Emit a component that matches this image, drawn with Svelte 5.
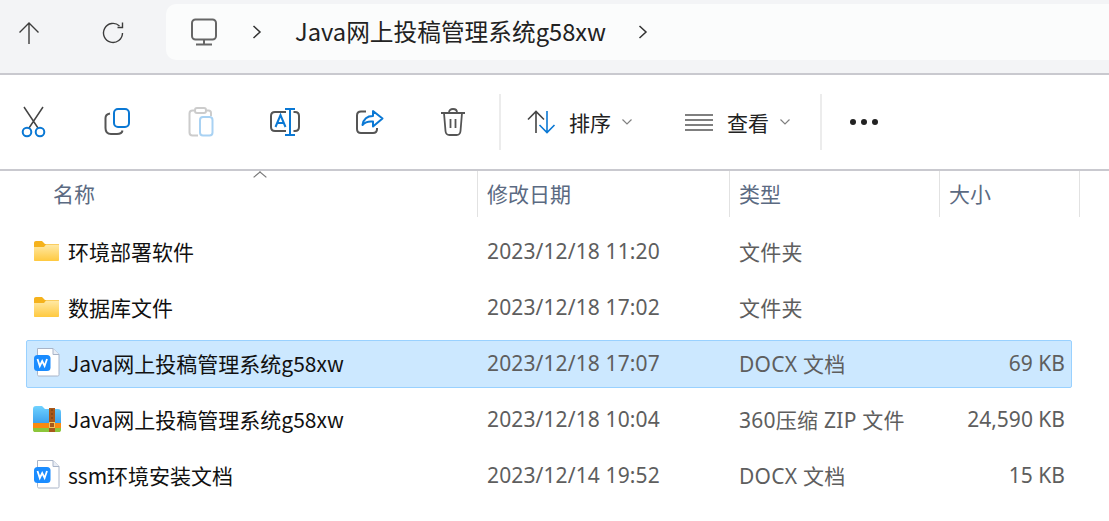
<script>
	const columns = [
		{ label: '名称', cls: 'c-name' },
		{ label: '修改日期', cls: 'c-date' },
		{ label: '类型', cls: 'c-type' },
		{ label: '大小', cls: 'c-size' }
	];

	const files = [
		{ name: '环境部署软件', date: '2023/12/18 11:20', type: '文件夹', size: '', icon: 'folder' },
		{ name: '数据库文件', date: '2023/12/18 17:02', type: '文件夹', size: '', icon: 'folder' },
		{ name: 'Java网上投稿管理系统g58xw', date: '2023/12/18 17:07', type: 'DOCX 文档', size: '69 KB', icon: 'doc', selected: true },
		{ name: 'Java网上投稿管理系统g58xw', date: '2023/12/18 10:04', type: '360压缩 ZIP 文件', size: '24,590 KB', icon: 'zip' },
		{ name: 'ssm环境安装文档', date: '2023/12/14 19:52', type: 'DOCX 文档', size: '15 KB', icon: 'doc' }
	];
</script>

<div class="window">
	<header class="navbar">
		<svg class="nav-up" width="22" height="24" viewBox="0 0 22 24" fill="none" stroke="#3c3c3c" stroke-width="1.4">
			<path d="M11 2V23M1.500 11.500L11 2L20.500 11.500" />
		</svg>
		<svg class="nav-refresh" width="24" height="24" viewBox="0 0 24 24" fill="none" stroke="#3c3c3c" stroke-width="1.4">
			<path d="M20.500 12a9.500 9.500 0 1 1-3-7M20.500 1.500V6.500H15.500" />
		</svg>
		<div class="address">
			<svg class="pc" width="28" height="28" viewBox="0 0 28 28" fill="none" stroke="#666" stroke-width="2">
				<rect x="2" y="1.500" width="24" height="20" rx="3.500" />
				<path d="M14 21.500V26M6 26.500H22" />
			</svg>
			<svg class="chev first" width="10" height="16" viewBox="0 0 10 16" fill="none" stroke="#333" stroke-width="1.500"><path d="M1.500 2L8 8L1.500 14" /></svg>
			<span class="crumb">Java网上投稿管理系统g58xw</span>
			<svg class="chev last" width="10" height="16" viewBox="0 0 10 16" fill="none" stroke="#333" stroke-width="1.500"><path d="M1.500 2L8 8L1.500 14" /></svg>
		</div>
	</header>

	<div class="toolbar">
		<div class="tools">
			<svg width="28" height="32" viewBox="0 0 28 32" fill="none" stroke-width="1.500">
				<path d="M4 1L18 22M23 1L9 22" stroke="#444" />
				<circle cx="7" cy="26" r="4.300" stroke="#0a78d4" stroke-width="2" />
				<circle cx="20" cy="26" r="4.300" stroke="#0a78d4" stroke-width="2" />
			</svg>
			<svg width="28" height="28" viewBox="0 0 28 28" fill="none" stroke-width="2">
				<path d="M6 5.500C3 6 1.500 8 1.500 10V20C1.500 24 3 26 7 26H13C16 26 18 25 18.500 22.500" stroke="#555" />
				<rect x="10" y="1" width="15" height="18" rx="4" stroke="#0a78d4" />
			</svg>
			<svg width="26" height="30" viewBox="0 0 26 30" fill="none" stroke-width="2">
				<path d="M6 3.500H4.500C2.500 3.500 1.500 4.500 1.500 6.500V25.500C1.500 27.500 2.500 28.500 4.500 28.500H10M19 3.500H20.500C22 3.500 23 4.500 23 6V9" stroke="#ccc" />
				<rect x="7" y="1" width="11" height="5" rx="2" stroke="#ccc" />
				<rect x="12" y="10" width="12.500" height="18.500" rx="3" stroke="#a9d2f3" />
			</svg>
			<svg width="30" height="28" viewBox="0 0 30 28" fill="none" stroke-width="2">
				<path d="M16 4H5C2.500 4 1 5.500 1 8V19C1 21.500 2.500 23 5 23H16M23.500 4H25C27.500 4 29 5.500 29 8V19C29 21.500 27.500 23 25 23H23.500" stroke="#555" />
				<path d="M15 1H25M20 1V27M15 27H25" stroke="#0a78d4" />
				<path d="M5.500 19L10.500 7L15.500 19M7.500 15H13.500" stroke="#0a78d4" />
			</svg>
			<svg width="28" height="26" viewBox="0 0 28 26" fill="none" stroke-width="2">
				<path d="M10 2.500H5C2.500 2.500 1 4 1 6.500V20C1 22.500 2.500 24 5 24H17C19.500 24 21 22.500 21 20V19" stroke="#555" />
				<path d="M17 2V7C11 7 7.500 10 6.500 16C9 13 12.500 12 17 12.500V17.500L26.500 9.500Z" stroke="#0a78d4" stroke-linejoin="round" />
			</svg>
			<svg width="26" height="28" viewBox="0 0 26 28" fill="none" stroke="#555" stroke-width="1.800">
				<path d="M1 5H25M4 5L5.500 23C5.700 25.500 7 27 9.500 27H16.500C19 27 20.300 25.500 20.500 23L22 5M9 4.500C9 2.500 10.500 1 13 1S17 2.500 17 4.500M10.500 11V20M15.500 11V20" />
			</svg>
		</div>
		<span class="divider d1"></span>
		<div class="menu sort">
			<svg width="30" height="24" viewBox="0 0 30 24" fill="none" stroke-width="1.600">
				<path d="M9 23V1.500M1 9.500L9 1.500L17 9.500" stroke="#444" />
				<path d="M20 1V22.500M12.500 15L20 22.500L27.500 15" stroke="#0a78d4" />
			</svg>
			<span>排序</span>
			<svg class="caret" width="12" height="8" viewBox="0 0 12 8" fill="none" stroke="#808080" stroke-width="1.200"><path d="M1.500 1.500L6 6L10.500 1.500" /></svg>
		</div>
		<div class="menu view">
			<svg width="28" height="18" viewBox="0 0 28 18" fill="none" stroke="#555" stroke-width="1.500">
				<path d="M0 2H28M0 7H28M0 12H28M0 17H28" />
			</svg>
			<span>查看</span>
			<svg class="caret" width="12" height="8" viewBox="0 0 12 8" fill="none" stroke="#808080" stroke-width="1.200"><path d="M1.500 1.500L6 6L10.500 1.500" /></svg>
		</div>
		<span class="divider d2"></span>
		<div class="more"><i></i><i></i><i></i></div>
	</div>

	<div class="list-head">
		<span class="sort-mark"></span>
		{#each columns as col}
			<div class="cell {col.cls}">{col.label}</div>
		{/each}
	</div>

	<div class="rows">
		{#each files as file}
			<div class="row" class:selected={file.selected}>
				<div class="name">
					<span class="icon">
						{#if file.icon === 'folder'}
							<svg width="25" height="20" viewBox="0 0 25 20">
								<defs>
									<linearGradient id="folderFill" x1="0" y1="0" x2="0" y2="1">
										<stop offset="0" stop-color="#ffe9a6" />
										<stop offset="1" stop-color="#ffc93f" />
									</linearGradient>
								</defs>
								<path d="M0 2C0 .8.800 0 2 0H8L11 3H24C24.600 3 25 3.400 25 4V6H0Z" fill="#f5b21c" />
								<path d="M0 6L10 6L12 3.500H24C24.600 3.500 25 3.900 25 4.500V19C25 19.600 24.600 20 24 20H1C.4 20 0 19.600 0 19Z" fill="url(#folderFill)" />
							</svg>
						{:else if file.icon === 'doc'}
							<svg width="26" height="29" viewBox="0 0 26 29">
								<path d="M3.500.5H19L25 6.500V26.500C25 27.500 24.500 28 23.500 28H5C4 28 3.500 27.500 3.500 26.500Z" fill="#fff" stroke="#a8b4c8" />
								<path d="M19 .5V6.500H25" fill="#e8edf5" stroke="#a8b4c8" />
								<rect x="0" y="7" width="16.500" height="16" rx="3.500" fill="#1a8cff" />
								<path d="M3.500 11L5.800 18L8.200 13L10.600 18L13 11" fill="none" stroke="#fff" stroke-width="1.800" />
							</svg>
						{:else}
							<svg class="zip" width="28" height="26" viewBox="0 0 28 26">
								<defs>
									<linearGradient id="zipFill" x1="0" y1="0" x2="0" y2="1">
										<stop offset="0" stop-color="#6fd2ff" />
										<stop offset="1" stop-color="#3a9fec" />
									</linearGradient>
								</defs>
								<path d="M0 3C0 1 1 0 3 0H9L12 3H25C27 3 28 4 28 6V18H0Z" fill="url(#zipFill)" />
								<rect x="0" y="17" width="28" height="5" fill="#f98a10" />
								<path d="M0 22H28V24C28 25.500 27 26 26 26H2C1 26 0 25.500 0 24Z" fill="#8cc63a" />
								<rect x="16" y="2" width="6" height="24" fill="#a8581a" />
								<path d="M19 3V14" stroke="#6d3a10" stroke-width="1" stroke-dasharray="2 2" />
								<rect x="16.500" y="16.500" width="5" height="5" fill="none" stroke="#f2c65c" />
							</svg>
						{/if}
					</span>
					<span class="label">{file.name}</span>
				</div>
				<div class="date">{file.date}</div>
				<div class="type">{file.type}</div>
				<div class="size">{file.size}</div>
			</div>
		{/each}
	</div>
</div>

<style>
	:global(body) {
		margin: 0;
		background: #fff;
	}

	.window {
		width: 1109px;
		height: 521px;
		overflow: hidden;
		background: #fff;
		font-family: "Noto Sans CJK SC", "Noto Sans", sans-serif;
	}

	.navbar {
		height: 73px;
		background: #f3f4f6;
		border-bottom: 2px solid #c9c9cf;
		display: flex;
		align-items: flex-start;
	}

	.nav-up {
		margin: 21px 0 0 18px;
	}

	.nav-refresh {
		margin: 21px 0 0 62px;
	}

	.address {
		margin: 4px 0 0 40px;
		height: 56px;
		flex: 1;
		background: #fbfcfc;
		border-radius: 10px 0 0 10px;
		display: flex;
		align-items: center;
	}

	.pc {
		margin-left: 24px;
	}

	.chev.first {
		margin-left: 34px;
	}

	.chev.last {
		margin-left: 32px;
	}

	.crumb {
		margin-left: 33px;
		font-size: 23.7px;
		color: #222;
		line-height: 52px;
		padding-bottom: 2px;
	}

	.toolbar {
		height: 94px;
		border-bottom: 2px solid #c9c9cf;
		display: flex;
		align-items: center;
	}

	.tools {
		display: flex;
		align-items: center;
		gap: 56px;
		margin-left: 20px;
	}

	.divider {
		width: 2px;
		height: 56px;
		background: #ececec;
	}

	.d1 {
		margin-left: 33px;
	}

	.d2 {
		margin-left: 29px;
	}

	.menu {
		display: flex;
		align-items: center;
		font-size: 21px;
		color: #222;
	}

	.sort {
		margin-left: 26px;
	}

	.sort span {
		margin-left: 12px;
	}

	.view span {
		margin-left: 14px;
	}

	.caret {
		margin-left: 10px;
	}

	.view {
		margin-left: 52px;
	}

	.more {
		display: flex;
		gap: 5px;
		margin-left: 28px;
	}

	.more i {
		width: 6px;
		height: 6px;
		border-radius: 50%;
		background: #222;
	}

	.list-head {
		height: 47px;
		display: flex;
		position: relative;
		color: #5b6a82;
		font-size: 21px;
	}

	.sort-mark {
		position: absolute;
		left: 256px;
		top: 2px;
		width: 7px;
		height: 7px;
		border-left: 1px solid #777;
		border-top: 1px solid #777;
		transform: scaleX(1.2) rotate(45deg);
	}

	.cell {
		box-sizing: border-box;
		padding-left: 9px;
		line-height: 44px;
		border-right: 1px solid #e2e2e2;
		height: 46px;
	}

	.c-name {
		width: 478px;
		padding-left: 53px;
	}

	.c-date {
		width: 252px;
	}

	.c-type {
		width: 210px;
	}

	.c-size {
		width: 140px;
	}

	.rows {
		padding: 10px 37px 0 26px;
		display: flex;
		flex-direction: column;
		gap: 8px;
	}

	.row {
		height: 48px;
		box-sizing: border-box;
		display: flex;
		align-items: center;
		font-size: 21px;
		color: #5e5e5e;
		border: 1px solid transparent;
		border-radius: 2px;
		font-family: "Noto Sans", "Noto Sans CJK SC", sans-serif;
	}

	.row.selected {
		background: #cce8ff;
		border-color: #99d1ff;
	}

	.name {
		width: 451px;
		display: flex;
		align-items: center;
		color: #111;
		font-family: "Noto Sans CJK SC", "Noto Sans", sans-serif;
	}

	.label {
		line-height: 42px;
		padding-bottom: 2px;
	}

	.icon {
		width: 41px;
		padding-left: 7px;
		box-sizing: border-box;
		display: flex;
		margin-bottom: 3px;
	}

	.zip {
		margin-left: -1px;
	}

	.date {
		width: 252px;
		padding: 0 0 2px 9px;
		box-sizing: border-box;
		letter-spacing: 0.12px;
	}

	.type {
		width: 210px;
		padding: 0 0 2px 9px;
		box-sizing: border-box;
		letter-spacing: 0.25px;
	}

	.size {
		width: 125px;
		text-align: right;
		padding-bottom: 2px;
	}
</style>
